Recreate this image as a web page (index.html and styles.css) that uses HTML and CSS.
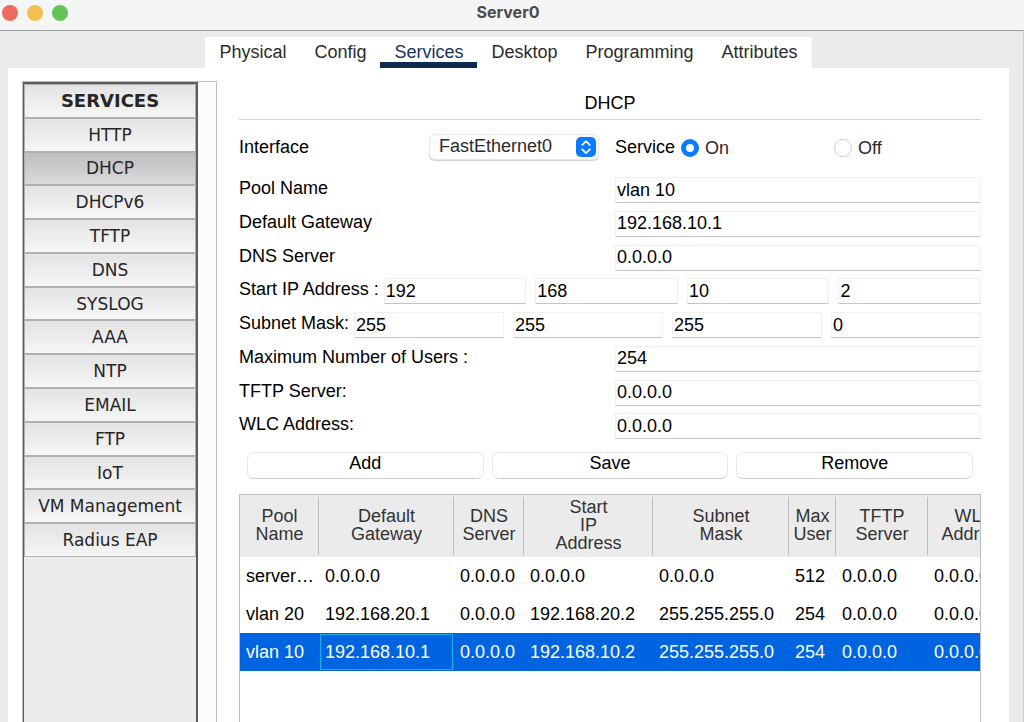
FILE: index.html
```
<!DOCTYPE html>
<html lang="en">
<head>
  <meta charset="UTF-8" />
  <title>Server0</title>
  <link rel="stylesheet" href="styles.css">
</head>
<body>
  <header class="titlebar">
    <div class="lights">
      <button class="light close" aria-label="Close"></button>
      <button class="light minimize" aria-label="Minimize"></button>
      <button class="light maximize" aria-label="Maximize"></button>
    </div>
    <h1>Server0</h1>
  </header>

  <div class="window">
    <nav class="tabs">
      <button>Physical</button>
      <button>Config</button>
      <button class="active">Services</button>
      <button>Desktop</button>
      <button>Programming</button>
      <button>Attributes</button>
    </nav>

    <div class="panel">
      <aside class="sidebar">
        <div class="service-list">
          <div class="services">
            <h2>SERVICES</h2>
            <button>HTTP</button>
            <button class="selected">DHCP</button>
            <button>DHCPv6</button>
            <button>TFTP</button>
            <button>DNS</button>
            <button>SYSLOG</button>
            <button>AAA</button>
            <button>NTP</button>
            <button>EMAIL</button>
            <button>FTP</button>
            <button>IoT</button>
            <button>VM Management</button>
            <button>Radius EAP</button>
          </div>
        </div>
      </aside>

      <main class="content">
        <h2 class="page-title">DHCP</h2>

        <div class="row top-row">
          <div class="interface">
            <label for="interface">Interface</label>
            <div class="select-box">
              <select id="interface">
                <option>FastEthernet0</option>
              </select>
              <svg class="arrows" viewBox="0 0 20 20">
                <rect width="20" height="20" rx="5" fill="#0a7aff" />
                <path d="M6.2 8 L10 4.2 L13.8 8 M6.2 12.4 L10 16.2 L13.8 12.4" fill="none" stroke="#fff" stroke-width="1.7" stroke-linecap="round" stroke-linejoin="round" />
              </svg>
            </div>
          </div>
          <div class="service" role="radiogroup" aria-labelledby="serviceLabel">
            <span id="serviceLabel">Service</span>
            <label class="radio"><input type="radio" name="service" checked />On</label>
            <label class="radio"><input type="radio" name="service" />Off</label>
          </div>
        </div>

        <div class="form">
          <div class="row">
            <label for="poolName">Pool Name</label>
            <input id="poolName" type="text" value="vlan 10" />
          </div>
          <div class="row">
            <label for="gateway">Default Gateway</label>
            <input id="gateway" type="text" value="192.168.10.1" />
          </div>
          <div class="row">
            <label for="dns">DNS Server</label>
            <input id="dns" type="text" value="0.0.0.0" />
          </div>
          <div class="octets">
            <label for="startIp">Start IP Address :</label>
            <input id="startIp" type="text" value="192" />
            <input type="text" value="168" aria-label="Start IP octet 2" />
            <input type="text" value="10" aria-label="Start IP octet 3" />
            <input type="text" value="2" aria-label="Start IP octet 4" />
          </div>
          <div class="octets">
            <label for="mask">Subnet Mask:</label>
            <input id="mask" type="text" value="255" />
            <input type="text" value="255" aria-label="Mask octet 2" />
            <input type="text" value="255" aria-label="Mask octet 3" />
            <input type="text" value="0" aria-label="Mask octet 4" />
          </div>
          <div class="row">
            <label for="maxUsers">Maximum Number of Users :</label>
            <input id="maxUsers" type="text" value="254" />
          </div>
          <div class="row">
            <label for="tftp">TFTP Server:</label>
            <input id="tftp" type="text" value="0.0.0.0" />
          </div>
          <div class="row">
            <label for="wlc">WLC Address:</label>
            <input id="wlc" type="text" value="0.0.0.0" />
          </div>
        </div>

        <div class="actions">
          <button>Add</button>
          <button>Save</button>
          <button>Remove</button>
        </div>

        <div class="table-box">
          <table>
            <colgroup>
              <col class="c-pool"><col class="c-gateway"><col class="c-dns"><col class="c-start">
              <col class="c-mask"><col class="c-max"><col class="c-tftp"><col class="c-wlc">
            </colgroup>
            <thead>
              <tr>
                <th>Pool<br>Name</th>
                <th>Default<br>Gateway</th>
                <th>DNS<br>Server</th>
                <th>Start<br>IP<br>Address</th>
                <th>Subnet<br>Mask</th>
                <th>Max<br>User</th>
                <th>TFTP<br>Server</th>
                <th>WLC<br>Address</th>
              </tr>
            </thead>
            <tbody>
              <tr>
                <td>serverPool</td><td>0.0.0.0</td><td>0.0.0.0</td><td>0.0.0.0</td>
                <td>0.0.0.0</td><td>512</td><td>0.0.0.0</td><td>0.0.0.0</td>
              </tr>
              <tr>
                <td>vlan 20</td><td>192.168.20.1</td><td>0.0.0.0</td><td>192.168.20.2</td>
                <td>255.255.255.0</td><td>254</td><td>0.0.0.0</td><td>0.0.0.0</td>
              </tr>
              <tr class="selected">
                <td>vlan 10</td><td class="current">192.168.10.1</td><td>0.0.0.0</td><td>192.168.10.2</td>
                <td>255.255.255.0</td><td>254</td><td>0.0.0.0</td><td>0.0.0.0</td>
              </tr>
            </tbody>
          </table>
        </div>
      </main>
    </div>
  </div>
</body>
</html>
```
FILE: styles.css
```
* {
  box-sizing: border-box;
}

body {
  margin: 0;
  height: 100vh;
  display: flex;
  flex-direction: column;
  overflow: hidden;
  font-family: "Liberation Sans", Arial, sans-serif;
  font-size: 18px;
  color: #000;
  background-color: #ebebeb;
}

button,
input,
select {
  font: inherit;
  color: inherit;
}

h1,
h2 {
  margin: 0;
}

/* title bar */
.titlebar {
  position: relative;
  height: 31px;
  flex: none;
  padding-bottom: 6px;
  display: flex;
  align-items: center;
  justify-content: center;
  background-color: #f4f6f5;
  border-bottom: 1px solid #9a9f9d;
}

.titlebar h1 {
  font-family: Inter, "Liberation Sans", sans-serif;
  font-size: 16px;
  font-weight: 700;
  padding-right: 8px;
  color: #4b4b4b;
}

.lights {
  position: absolute;
  left: 2px;
  top: 5px;
  display: flex;
  gap: 9px;
}

.light {
  width: 16px;
  height: 16px;
  padding: 0;
  border: none;
  border-radius: 50%;
}

.close {
  background-color: #ed6a5f;
}

.minimize {
  background-color: #f5bf50;
}

.maximize {
  background-color: #62c555;
}

.window {
  flex: 1;
  min-height: 0;
  display: flex;
  flex-direction: column;
  padding: 6px 14px 0 8px;
  border-right: 1px solid #cfcfcf;
}

/* tabs */
.tabs {
  align-self: center;
  flex: none;
  display: flex;
  height: 31px;
  background-color: #fff;
}

.tabs button {
  padding: 5px 14px 0;
  border: none;
  border-bottom: 6px solid transparent;
  background: none;
  color: #2b2b2b;
}

.tabs .active {
  color: #17335f;
  border-bottom-color: #0e2a52;
}

.panel {
  flex: 1;
  min-height: 0;
  display: flex;
  gap: 22px;
  padding: 13px 28px 0 14px;
  background-color: #fff;
}

/* services list */
.sidebar {
  flex: none;
  width: 195px;
  padding-right: 18px;
  border: 1px solid #bdbdbd;
  border-bottom: none;
  background-color: #fbfcfb;
}

.service-list {
  height: 100%;
  border: 2px solid #5c5c5c;
  border-left-width: 1px;
  border-bottom: none;
  background-color: #ebebeb;
}

.services {
  display: grid;
  grid-auto-rows: 1fr;
  height: 473px;
}

.services h2,
.services button {
  display: flex;
  align-items: center;
  justify-content: center;
  padding: 0;
  border: 1px solid #b0b0b0;
  background: linear-gradient(#e3e3e3, #f6f6f6);
  font-family: "DejaVu Sans", Verdana, sans-serif;
  font-size: 17px;
  color: #262626;
}

.services h2 {
  font-size: 18px;
}

.services .selected {
  background: linear-gradient(#bebebe, #dadada);
}

/* dhcp form */
.content {
  flex: 1;
  min-width: 0;
  display: flex;
  flex-direction: column;
}

.page-title {
  font-size: 18px;
  font-weight: normal;
  line-height: 20px;
  text-align: center;
  padding: 12px 0 6px;
  border-bottom: 1px solid #d6d6d6;
}

.row {
  display: grid;
  grid-template-columns: 1fr 1fr;
  column-gap: 10px;
  align-items: start;
}

.top-row {
  padding: 14px 0 17px;
}

.row label,
.octets label,
.service span {
  line-height: 22px;
}

.interface {
  display: flex;
  justify-content: space-between;
  align-items: center;
  padding-right: 6px;
}

.select-box {
  position: relative;
}

.select-box select {
  display: block;
  appearance: none;
  width: 170px;
  height: 26px;
  padding: 0 26px 2px 9px;
  border: 1px solid #e8e8e8;
  border-radius: 6px;
  background-color: #fff;
  box-shadow: 0 1px 1px #d0d0d0;
  color: #2b2b2b;
}

.arrows {
  position: absolute;
  right: 3px;
  top: 3px;
  width: 20px;
  height: 20px;
  pointer-events: none;
}

.service {
  display: flex;
  align-items: center;
  gap: 6px;
  height: 26px;
}

.radio {
  flex: 1;
  display: flex;
  align-items: center;
  gap: 6px;
  padding-top: 2px;
  color: #2b2b2b;
}

.radio input {
  appearance: none;
  width: 18px;
  height: 18px;
  margin: 0;
  border: 1px solid #cfcfcf;
  border-radius: 50%;
  background-color: #fff;
}

.radio input:checked {
  border: 5px solid #0a7aff;
}

.form {
  display: grid;
  grid-auto-rows: 1fr;
  height: 270px;
}

.form input {
  width: 100%;
  min-width: 0;
  height: 26px;
  padding: 0 1px;
  border: 1px solid #f0f0f0;
  border-bottom-color: #c4c4c4;
  background-color: #fff;
}

.octets {
  display: flex;
  align-items: flex-start;
}

.octets label {
  flex: none;
  margin-right: 5px;
}

.octets input {
  flex: 1;
}

.octets input + input {
  margin-left: 9px;
}

.actions {
  display: grid;
  grid-template-columns: repeat(3, 1fr);
  gap: 8px;
  padding: 5px 8px 15px;
}

.actions button {
  height: 27px;
  padding: 0 0 4px;
  border: 1px solid #e8e8e8;
  border-bottom-color: #cecece;
  border-radius: 7px;
  background-color: #fff;
}

/* pool table */
.table-box {
  flex: 1;
  min-height: 0;
  overflow: hidden;
  border: 1px solid #bdbdbd;
  border-bottom: none;
}

table {
  table-layout: fixed;
  width: 781px;
  border-collapse: collapse;
}

.c-pool { width: 79px; }
.c-gateway { width: 135px; }
.c-dns { width: 70px; }
.c-start { width: 129px; }
.c-mask { width: 136px; }
.c-max { width: 47px; }
.c-tftp { width: 92px; }
.c-wlc { width: 93px; }

th {
  height: 62px;
  padding: 0 0 2px;
  font-weight: normal;
  line-height: 18px;
  color: #333;
  background: #ebebeb linear-gradient(#bdbdbd, #bdbdbd) right center / 1px 58px no-repeat;
}

td {
  height: 38px;
  padding: 0 3px 0 6px;
  overflow: hidden;
  text-overflow: ellipsis;
  white-space: nowrap;
}

tr.selected td {
  color: #fff;
  background-color: #0064e1;
}

tr.selected .current {
  outline: 1px solid #12b0ee;
  outline-offset: -2px;
}
```
